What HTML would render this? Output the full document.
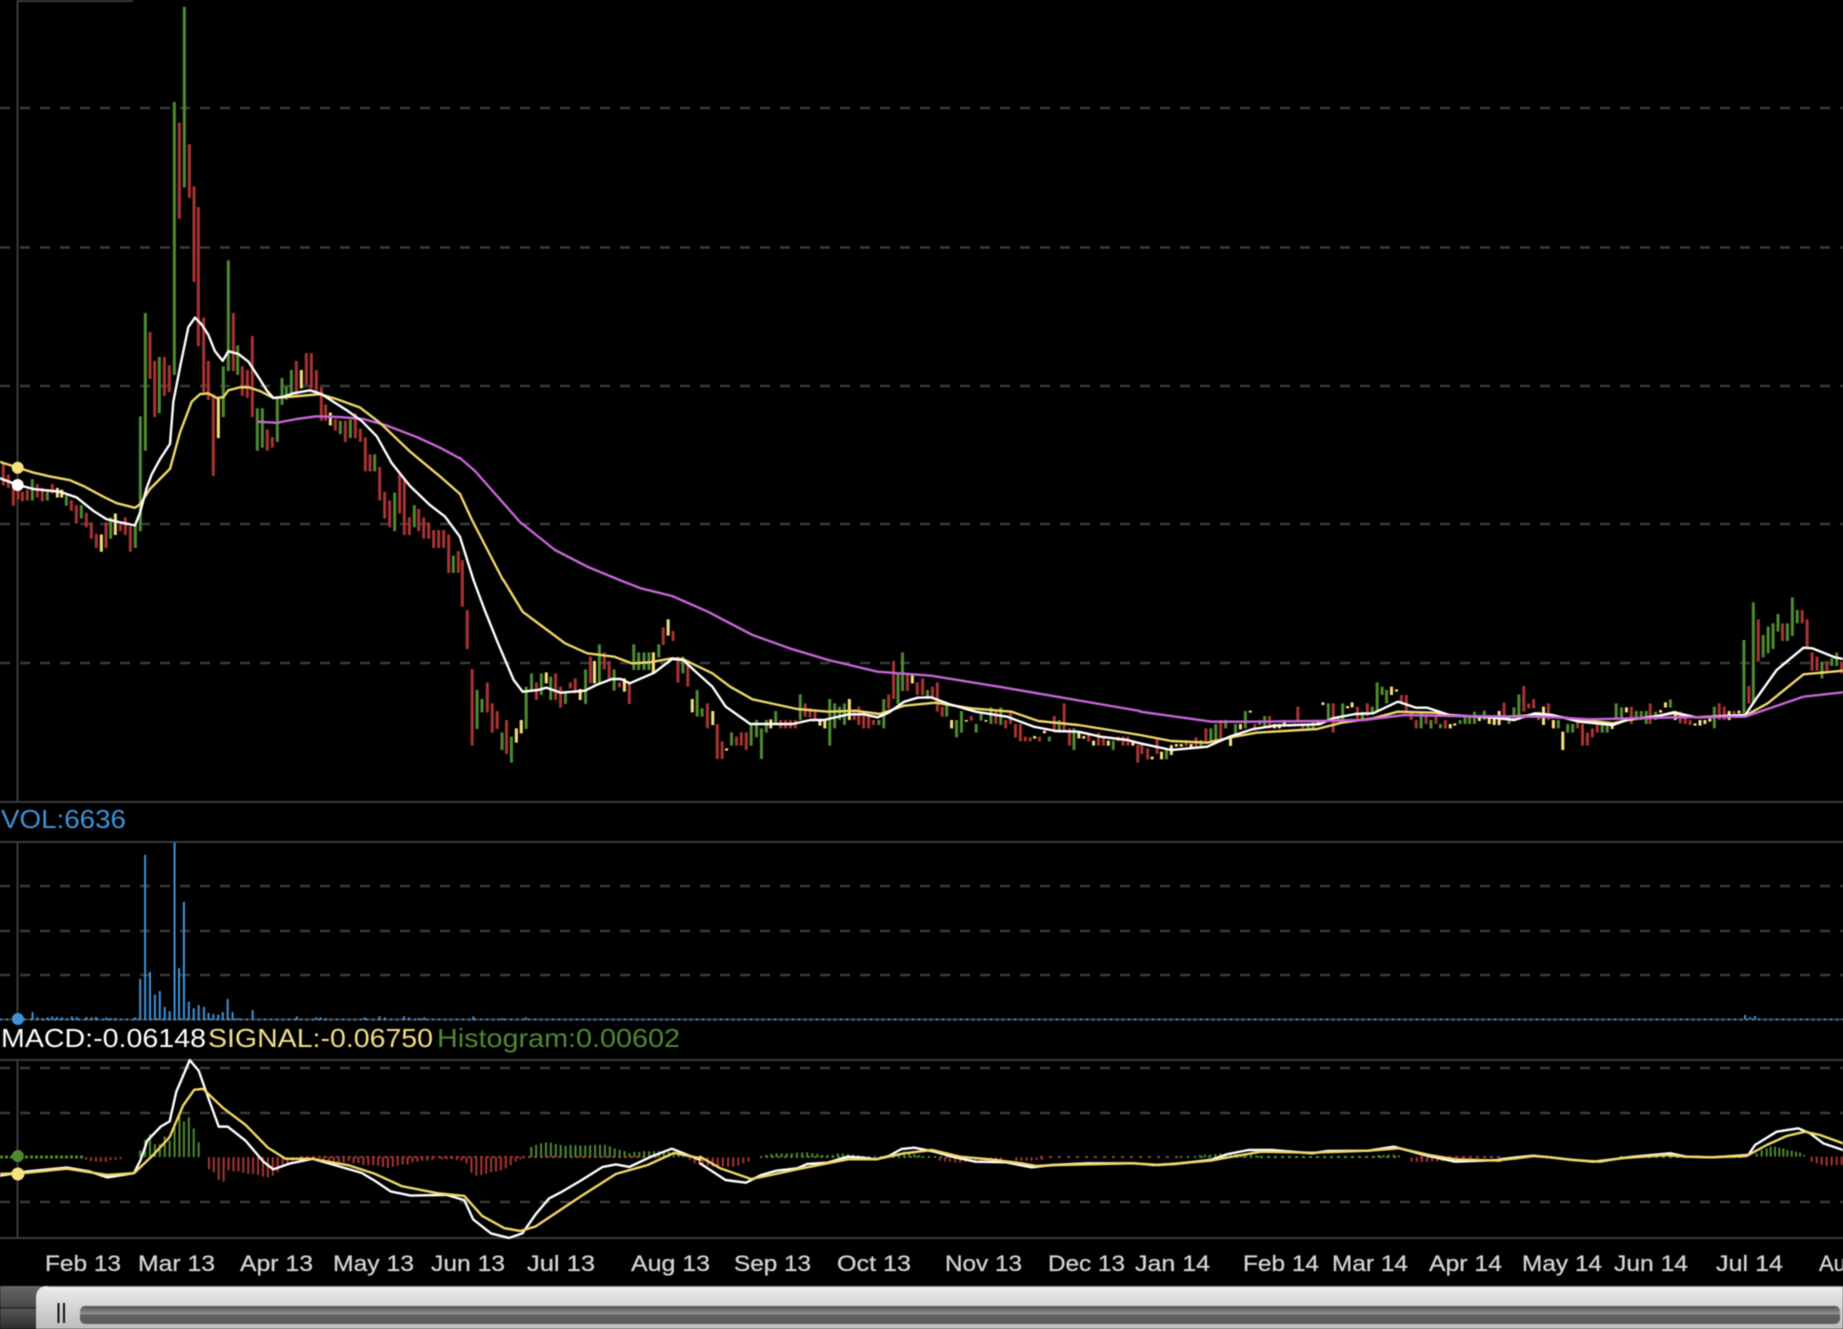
<!DOCTYPE html>
<html><head><meta charset="utf-8"><title>Chart</title>
<style>
html,body{margin:0;padding:0;background:#000;width:1843px;height:1329px;overflow:hidden}
svg{display:block;position:absolute;left:0;top:0;filter:blur(.45px)}
path{vector-effect:non-scaling-stroke;fill:none}
.r{stroke:#a83434}.g{stroke:#4f8a32}.y{stroke:#f6df7e}
.c path{stroke-width:3}
.h path{stroke-width:2}
.lw,.ly,.lp{stroke-linejoin:round;stroke-linecap:round;stroke-width:2.4}
.lw{stroke:#fff}.ly{stroke:#f0d768}.lp{stroke:#c765d8}
.grid{stroke:#3a3a3a;stroke-width:2.4;stroke-dasharray:10 10}
.ax{stroke:#3a3a3a;stroke-width:2}
text{font-family:"Liberation Sans",sans-serif}
.m{font-size:22px;fill:#d4d4d4;stroke:#d4d4d4;stroke-width:.3px}
.leg{font-size:26px}
</style></head><body>
<svg width="1843" height="1329" xmlns="http://www.w3.org/2000/svg">
<defs>
<linearGradient id="pan" x1="0" y1="0" x2="0" y2="1"><stop offset="0" stop-color="#ececec"/><stop offset=".5" stop-color="#d4d4d4"/><stop offset="1" stop-color="#bcbcbc"/></linearGradient>
<linearGradient id="trk" x1="0" y1="0" x2="0" y2="1"><stop offset="0" stop-color="#505050"/><stop offset=".45" stop-color="#929292"/><stop offset=".5" stop-color="#606060"/><stop offset="1" stop-color="#5c5c5c"/></linearGradient>
<linearGradient id="lft" x1="0" y1="0" x2="0" y2="1"><stop offset="0" stop-color="#666"/><stop offset=".48" stop-color="#4a4a4a"/><stop offset=".5" stop-color="#222"/><stop offset=".55" stop-color="#555"/><stop offset="1" stop-color="#2c2c2c"/></linearGradient>
</defs>
<rect width="1843" height="1329" fill="#000"/>
<!-- frame lines -->
<path class="ax" d="M17.5 1H133M17.5 0V802M17.5 842V1020M17.5 1060V1237M0 802H1843M0 842H1843M0 1060H1843M0 1238H1843"/>
<!-- grids -->
<path class="grid" d="M0 108H1843M0 247.500H1843M0 386H1843M0 524H1843M0 663H1843M0 886H1843M0 931H1843M0 975H1843M0 1068H1843M0 1113H1843M0 1202H1843"/>

<!-- candles region 1 -->
<g class="c" transform="scale(.33333,.38265)">
<path class="r" d="M10 1210V1268M25 1240V1275M40 1270V1322M54 1270V1305M67 1285V1310M82 1280V1308M112 1265V1300M127 1275V1310M157 1265V1290M214 1307V1335M229 1320V1368M259 1340V1378M274 1365V1408M289 1395V1432M318 1365V1432M361 1370V1388M376 1352V1398M391 1375V1442M450 868V990M464 943V1090M493 933V1035M508 955V1025M538 320V572M568 377V517M582 487V737M595 541V905M611 830V1025M625 943V1045M640 1030V1244M700 818V970M727 957V1035M742 967V1040M757 878V1090M802 1122V1178M817 1142V1170M889 943V1035M919 923V1005M934 923V1015M949 967V1025M964 1012V1100M977 1057V1100M1006 1095V1125M1036 1100V1155M1066 1080V1145M1081 1120V1155M1096 1143V1232M1110 1187V1232M1139 1220V1308M1154 1285V1355M1169 1308V1378M1199 1240V1342M1213 1250V1398M1228 1352V1398M1256 1330V1388M1271 1352V1408M1286 1365V1408M1301 1385V1432M1316 1385V1432M1331 1385V1432M1346 1397V1497M1375 1440V1497"/>
<path class="g" d="M97 1252V1308M142 1285V1308M199 1295V1322M244 1320V1355M332 1352V1408M406 1372V1432M421 1088V1388M436 818V1178M478 933V1080M523 267V980M553 18V490M670 957V1090M685 680V970M713 903V980M772 1067V1178M787 1067V1170M832 1040V1155M846 988V1058M859 1010V1045M874 967V1035M1021 1100V1135M1051 1097V1145M1124 1187V1232M1184 1287V1388M1243 1320V1378M1360 1452V1497"/>
<path class="y" d="M172 1275V1300M185 1280V1300M304 1397V1442M346 1342V1398M655 1042V1145M904 967V1015M991 1078V1112"/>
</g>
<!-- candles region 2 -->
<g class="c" transform="translate(440,580) scale(.44643,.33333)">
<path class="r" d="M50 -60V80M61 90V207M72 267V497M106 307V397M117 370V458M128 393V447M149 420V522M216 307V360M259 280V360M270 320V383M292 307V325M303 295V340M337 230V310M368 217V268M379 243V300M402 307V322M424 310V372M500 142V195M522 153V183M533 230V308M555 243V320M599 370V445M621 432V537M632 484V537M664 470V497M675 457V497M686 457V510M763 420V445M774 420V445M785 420V445M796 420V445M818 370V410M829 385V412M840 395V420M928 395V420M938 380V435M949 405V445M960 405V445M971 420V435M1005 343V385M1016 243V357M1047 280V333M1069 307V345M1081 295V345M1103 320V355M1114 307V395M1125 380V410M1190 408V422M1245 395V432M1267 420V445M1278 395V432M1289 432V472M1300 432V484M1311 470V484M1322 472V484M1343 470V484M1376 408V458M1398 370V458M1410 445V497M1453 458V484M1475 458V497M1486 470V497M1519 470V484M1530 470V497M1541 470V497M1563 495V548"/>
<path class="g" d="M83 330V447M94 357V397M139 457V510M160 470V548M193 320V447M205 280V335M227 280V345M248 290V360M281 340V372M326 268V372M357 193V310M390 268V332M434 193V270M445 217V270M457 217V270M468 217V270M490 193V232M544 230V280M576 330V410M587 385V410M653 457V497M697 432V497M709 420V472M720 445V537M731 420V458M752 393V430M807 343V420M873 357V497M884 370V445M895 380V420M906 370V435M983 420V435M994 357V445M1026 280V372M1036 217V333M1092 330V357M1135 370V410M1157 420V472M1168 393V458M1201 432V458M1212 395V422M1234 382V432M1256 382V435M1365 470V484M1387 420V458M1420 445V510M1508 482V510"/>
<path class="y" d="M171 445V488M182 420V460M238 277V310M314 327V360M346 243V310M413 295V335M478 217V280M511 118V167M565 357V397M611 393V435M642 505V512M741 418V445M851 420V437M862 420V445M917 357V420M1058 285V310M1146 420V445M1179 420V425M1223 420V425M1332 468V476M1354 452V460M1431 458V475M1442 468V476M1464 482V497M1497 482V497M1552 482V497"/>
</g>
<!-- candles region 3 -->
<g class="c" transform="translate(1140,580) scale(.44834,.33333)">
<path class="r" d="M4 490V522M17 505V538M38 478V522M103 480V498M125 472V505M147 445V490M180 420V475M256 432V450M289 408V445M344 430V440M352 380V423M363 430V445M431 370V458M485 380V420M507 370V408M583 345V370M594 345V395M605 395V420M616 420V445M638 408V432M660 408V432M681 420V445M812 368V420M856 318V395M867 370V385M878 357V385M911 370V420M976 420V445M987 432V497M998 458V497M1009 445V472M1020 432V458M1096 380V432M1138 370V432M1205 395V430M1216 408V432M1227 420V435M1292 370V420M1303 380V420M1325 393V408M1358 318V370M1379 118V245M1433 130V183M1477 90V130M1488 118V200M1499 217V272M1510 230V272M1532 243V272M1565 245V280"/>
<path class="g" d="M59 510V538M136 480V500M158 445V490M169 432V490M191 420V445M213 432V470M235 393V445M267 420V435M278 408V445M375 432V445M386 420V445M420 370V420M442 408V420M452 370V420M496 395V420M518 380V398M529 307V395M540 320V345M550 330V370M627 395V445M649 420V445M670 432V445M714 420V432M725 408V432M735 408V432M746 395V432M768 392V420M823 408V432M834 382V420M845 343V408M889 395V420M933 420V445M954 432V458M965 432V458M1031 432V458M1042 432V458M1062 370V420M1074 382V420M1107 393V420M1118 393V420M1129 393V432M1150 395V420M1183 358V383M1281 380V445M1347 180V400M1368 67V370M1390 165V232M1401 140V220M1412 130V207M1423 102V155M1444 130V183M1455 52V168M1466 90V130M1521 245V295M1543 235V258M1554 217V258"/>
<path class="y" d="M27 530V538M48 515V538M70 495V525M81 492V500M92 492V500M114 492V502M202 470V498M224 432V448M246 392V398M300 432V445M311 432V445M322 420V440M333 432V440M397 420V435M408 367V375M463 378V385M473 367V382M561 320V345M572 328V335M692 432V445M702 430V437M757 408V423M779 408V432M790 408V435M801 393V435M900 380V435M922 420V445M943 455V510M1053 432V447M1085 382V397M1161 390V398M1172 367V382M1194 393V420M1238 430V437M1249 420V437M1260 420V432M1271 415V425M1314 393V420M1336 392V400"/>
</g>

<!-- main lines -->
<path class="lp" d="M460 458L475 471L520 522L555 550L588 567L619.500 580"/>
<path class="ly" d="M460 494L472 520L503 580"/>
<path class="lw" d="M460 537L473.500 580"/>
<g transform="scale(.33333,.38265)">
<path class="lp" d="M775 1102L830 1105L890 1095L950 1088L1020 1090L1090 1095L1160 1112L1250 1142L1320 1170L1380 1198"/>
<path class="ly" d="M0 1207L53 1222L100 1235L150 1245L210 1255L250 1270L310 1298L350 1315L405 1327L420 1318L450 1278L510 1225L540 1130L575 1050L600 1030L625 1028L650 1040L670 1038L685 1020L720 1012L745 1012L780 1022L820 1040L870 1037L960 1030L1010 1043L1080 1065L1140 1105L1230 1180L1320 1245L1380 1291"/>
<path class="lw" d="M0 1250L53 1267L100 1278L180 1285L230 1300L280 1335L320 1357L360 1365L405 1373L420 1340L440 1275L455 1240L480 1200L510 1160L520 1050L540 960L565 855L585 830L605 848L625 875L645 918L668 943L685 918L715 925L745 945L775 985L800 1020L820 1040L850 1037L880 1028L930 1020L965 1030L1000 1050L1040 1072L1085 1100L1130 1140L1175 1210L1230 1270L1290 1320L1335 1350L1380 1403"/>
</g>
<g transform="translate(440,580) scale(.44643,.33333)">
<path class="lp" d="M402 0L450 25L520 48L600 95L700 165L790 208L870 240L980 275L1100 287L1260 322L1390 352L1568 393"/>
<path class="ly" d="M142 0L185 95L240 150L280 190L330 220L390 230L430 250L470 247L520 235L545 238L610 280L650 320L700 358L800 387L870 395L930 392L985 402L1040 377L1110 368L1190 385L1280 395L1340 423L1430 435L1500 450L1568 465"/>
<path class="lw" d="M75 0L100 90L130 190L165 300L185 335L220 330L238 323L270 338L325 332L350 315L385 297L405 297L425 310L480 278L520 237L545 240L570 272L610 320L640 380L695 432L790 432L830 420L860 420L915 403L950 403L980 412L1005 398L1040 365L1070 353L1100 352L1140 372L1200 395L1270 410L1330 440L1380 453L1430 455L1480 470L1540 480L1568 490"/>
</g>
<g transform="translate(1140,580) scale(.44834,.33333)">
<path class="ly" d="M0 465L70 483L150 488L210 470L260 458L395 447L450 428L520 415L575 395L660 398L690 407L800 412L880 405L920 408L1000 422L1055 430L1090 420L1190 400L1240 412L1350 407L1400 370L1480 283L1568 272"/>
<path class="lw" d="M0 490L70 510L150 500L200 470L250 448L300 437L400 433L430 415L480 402L520 400L575 365L615 383L640 383L690 405L780 412L835 420L880 400L920 405L980 425L1055 435L1090 418L1150 410L1190 397L1240 412L1350 405L1375 355L1420 270L1480 203L1500 205L1550 232L1568 237"/>
<path class="lp" d="M0 395L80 410L160 425L270 425L400 423L500 420L590 405L700 408L900 410L1000 418L1200 412L1350 410L1480 350L1568 337"/>
</g>
<circle cx="17.700" cy="467.700" r="6" fill="#f6df7e"/>
<circle cx="17.700" cy="485" r="6" fill="#fff"/>

<!-- volume -->
<path d="M0 1019.500H1843" stroke="#333" stroke-width="2"/>
<path d="M0 1019.500H1843" stroke="#3e93d8" stroke-width="2" stroke-dasharray="2 4"/>
<g transform="translate(0,780) scale(.44643,.35013)">
<path stroke="#3e93d8" stroke-width="2" d="M73 663V685M84 678V685M95 680V685M106 678V685M117 675V685M128 677V685M139 678V685M150 680V685M161 675V685M172 677V685M194 677V685M205 678V685M215 677V685M238 678V685M248 680V685M259 680V685M303 678V685M314 568V685M325 214V685M336 548V685M347 613V685M358 603V685M369 648V685M380 660V685M391 178V685M401 537V685M412 348V685M423 633V685M434 652V685M445 643V685M457 648V685M467 665V685M478 668V685M489 670V685M499 663V685M510 625V685M521 663V685M534 680V685M566 657V685M620 681V685M665 675V685M708 678V685M718 678V685M730 680V685M817 678V685M850 675V685M862 678V685M905 675V685M916 678V685M938 680V685M950 678V685M1060 675V685M1125 680V685M1146 681V685M1178 678V685"/>
</g>
<path stroke="#3e93d8" stroke-width="2" d="M1745 1019V1015M1750 1019V1017M1755 1019V1016"/>
<circle cx="17.900" cy="1019" r="6" fill="#3e93d8"/>

<!-- MACD histogram -->
<path d="M0 1157H85" stroke="#4f8a32" stroke-width="3" stroke-dasharray="3 2"/>
<path d="M300 1157H660" stroke="#a83434" stroke-width="2" stroke-dasharray="3 3"/>
<path d="M760 1157H960" stroke="#4f8a32" stroke-width="2" stroke-dasharray="2 4"/>
<path d="M1040 1157H1180" stroke="#a83434" stroke-width="2" stroke-dasharray="3 6"/>
<path d="M1180 1157H1260" stroke="#4f8a32" stroke-width="2" stroke-dasharray="2 5"/>
<path d="M1260 1157H1400" stroke="#4f8a32" stroke-width="2" stroke-dasharray="3 4"/>
<path d="M1420 1157H1500" stroke="#a83434" stroke-width="2" stroke-dasharray="3 4"/>
<path d="M1620 1157H1745" stroke="#4f8a32" stroke-width="2" stroke-dasharray="3 4"/>
<g class="h" transform="translate(0,780) scale(.44643,.35013)">
<path class="g" d="M314 1077V1058M325 1077V1028M336 1077V1012M347 1077V1040M358 1077V1040M369 1077V1018M380 1077V1030M391 1077V980M402 1077V960M412 1077V975M423 1077V963M434 1077V995M445 1077V1035M1190 1077V1048M1201 1077V1042M1212 1077V1038M1223 1077V1035M1234 1077V1036M1245 1077V1040M1256 1077V1042M1267 1077V1045M1278 1077V1043M1289 1077V1043M1300 1077V1044M1311 1077V1044M1322 1077V1043M1333 1077V1042M1344 1077V1042M1355 1077V1042M1366 1077V1046M1377 1077V1052M1388 1077V1056M1399 1077V1060M1410 1077V1066M1421 1077V1062M1432 1077V1062M1443 1077V1060M1454 1077V1060M1465 1077V1060M1476 1077V1060M1487 1077V1060M1498 1077V1062M1509 1077V1065M1520 1077V1068M1531 1077V1070"/>
<path class="r" d="M193 1077V1085M204 1077V1088M215 1077V1090M226 1077V1090M237 1077V1090M248 1077V1085M259 1077V1085M270 1077V1083M468 1077V1112M479 1077V1120M490 1077V1142M501 1077V1147M512 1077V1115M523 1077V1118M534 1077V1118M545 1077V1122M556 1077V1125M567 1077V1125M578 1077V1128M589 1077V1133M600 1077V1135M611 1077V1130M622 1077V1120M633 1077V1105M644 1077V1095M655 1077V1088M666 1077V1085M725 1077V1085M737 1077V1087M748 1077V1088M759 1077V1092M770 1077V1092M781 1077V1088M792 1077V1095M803 1077V1095M814 1077V1100M825 1077V1100M836 1077V1100M847 1077V1102M858 1077V1105M869 1077V1108M880 1077V1105M891 1077V1102M902 1077V1098M913 1077V1098M924 1077V1092M935 1077V1090M946 1077V1087M957 1077V1087M968 1077V1085M990 1077V1083M1001 1077V1083M1012 1077V1083M1023 1077V1085M1034 1077V1087M1045 1077V1095M1056 1077V1122M1067 1077V1130M1078 1077V1128M1089 1077V1125M1100 1077V1120M1111 1077V1118M1122 1077V1115M1133 1077V1110M1144 1077V1100M1155 1077V1090M1166 1077V1083M1545 1077V1085M1556 1077V1095M1567 1077V1095"/>
</g>
<g class="h" transform="translate(700,1000) scale(.51020,.33333)">
<path class="r" d="M5 472V495M15 472V497M25 472V500M35 472V505M45 472V500M55 472V500M65 472V500M75 472V497M85 472V490M95 472V485M470 472V482M480 472V485M490 472V485M500 472V488M510 472V488M520 472V486M530 472V485M540 472V483M550 472V483M560 472V482M570 472V482M580 472V482M590 472V482M620 472V482M630 472V482M640 472V482M650 472V482M660 472V480M670 472V480M1395 472V485M1405 472V486M1415 472V486M1425 472V486M1435 472V484M1445 472V484M1455 472V484M1465 472V482M1475 472V480"/>
<path class="g" d="M120 472V468M130 472V465M140 472V462M150 472V460M160 472V460M170 472V460M180 472V460M190 472V458M200 472V457M210 472V457M220 472V460M230 472V462M240 472V465M250 472V465M260 472V465M270 472V460M280 472V460M290 472V462M300 472V463M310 472V465M370 472V468M380 472V465M390 472V460M400 472V455M410 472V458M420 472V462M430 472V465M980 472V465M990 472V464M1000 472V464M1010 472V462M1020 472V460M1030 472V460M1040 472V460M1050 472V462M1060 472V463M1070 472V463M1080 472V464M1090 472V466M1330 472V465M1340 472V465M1350 472V464M1360 472V464M1370 472V466"/>
</g>
<g class="h" transform="translate(1500,1100) scale(.33333,.33333)">
<path class="g" d="M770 170V160M785 170V150M800 170V145M812 170V140M825 170V140M838 170V143M850 170V145M862 170V150M875 170V152M888 170V155M900 170V158M912 170V165"/>
<path class="r" d="M935 170V185M950 170V190M965 170V195M980 170V198M995 170V197M1010 170V195M1025 170V195"/>
</g>

<!-- MACD lines -->
<g transform="translate(0,780) scale(.44643,.35013)">
<path class="lw" d="M0 1130L60 1118L150 1107L200 1118L240 1135L300 1123L315 1085L330 1030L360 990L380 975L395 890L425 800L445 830L470 920L490 990L510 990L550 1030L590 1090L612 1112L650 1095L700 1082L750 1100L810 1122L840 1145L875 1175L920 1187L1000 1185L1040 1200L1060 1255L1100 1295L1140 1308L1170 1295L1200 1240L1230 1195L1260 1175L1300 1145L1350 1105L1380 1098L1410 1105L1460 1075L1505 1053L1568 1085"/>
<path class="ly" d="M0 1125L60 1122L150 1110L240 1128L300 1123L340 1075L380 1020L410 930L435 885L455 882L500 937L550 985L600 1050L640 1082L700 1082L780 1100L840 1125L900 1160L980 1180L1040 1188L1080 1245L1130 1280L1165 1288L1200 1275L1300 1190L1380 1125L1450 1100L1510 1065L1568 1080"/>
</g>
<g transform="translate(700,1000) scale(.51020,.33333)">
<path class="lw" d="M0 490L25 515L50 540L90 548L120 525L150 512L190 505L210 492L250 488L290 470L320 473L345 478L370 468L395 447L420 443L460 455L500 472L540 485L600 487L650 502L690 495L760 490L850 490L890 495L930 492L1000 480L1035 462L1075 450L1120 450L1200 460L1230 453L1310 452L1360 440L1420 465L1480 485L1568 480"/>
<path class="ly" d="M0 470L40 505L100 537L130 528L200 505L290 478L345 478L400 460L455 450L510 470L580 480L630 490L660 498L700 495L850 490L900 495L1000 482L1050 468L1100 455L1200 458L1310 452L1370 445L1430 465L1480 478L1568 482"/>
</g>
<g transform="translate(1500,1100) scale(.33333,.33333)">
<path class="lw" d="M0 178L50 172L100 167L150 172L200 178L280 185L340 178L400 170L510 160L560 170L640 172L745 165L765 135L830 95L895 85L930 100L970 130L1029 150"/>
<path class="ly" d="M0 180L50 175L100 168L150 172L220 180L300 185L360 175L500 165L560 170L630 172L740 168L800 135L860 108L915 95L960 105L1029 130"/>
</g>
<circle cx="17.900" cy="1156" r="6" fill="#4f8a32"/>
<circle cx="17.900" cy="1174" r="6.500" fill="#f6df7e"/>

<!-- legends -->
<text class="leg" x="1" y="828" fill="#3e93d8" textLength="125" lengthAdjust="spacingAndGlyphs">VOL:6636</text>
<text class="leg" x="1" y="1047" fill="#fff" textLength="205" lengthAdjust="spacingAndGlyphs">MACD:-0.06148</text>
<text class="leg" x="208" y="1047" fill="#f3de8a" textLength="225" lengthAdjust="spacingAndGlyphs">SIGNAL:-0.06750</text>
<text class="leg" x="437" y="1047" fill="#4f8a32" textLength="243" lengthAdjust="spacingAndGlyphs">Histogram:0.00602</text>

<!-- axis labels -->
<text class="m" x="45" y="1271" textLength="76" lengthAdjust="spacingAndGlyphs">Feb 13</text>
<text class="m" x="138" y="1271" textLength="77" lengthAdjust="spacingAndGlyphs">Mar 13</text>
<text class="m" x="240" y="1271" textLength="73" lengthAdjust="spacingAndGlyphs">Apr 13</text>
<text class="m" x="333" y="1271" textLength="81" lengthAdjust="spacingAndGlyphs">May 13</text>
<text class="m" x="431" y="1271" textLength="74" lengthAdjust="spacingAndGlyphs">Jun 13</text>
<text class="m" x="527" y="1271" textLength="68" lengthAdjust="spacingAndGlyphs">Jul 13</text>
<text class="m" x="631" y="1271" textLength="79" lengthAdjust="spacingAndGlyphs">Aug 13</text>
<text class="m" x="734" y="1271" textLength="77" lengthAdjust="spacingAndGlyphs">Sep 13</text>
<text class="m" x="837" y="1271" textLength="74" lengthAdjust="spacingAndGlyphs">Oct 13</text>
<text class="m" x="945" y="1271" textLength="77" lengthAdjust="spacingAndGlyphs">Nov 13</text>
<text class="m" x="1048" y="1271" textLength="77" lengthAdjust="spacingAndGlyphs">Dec 13</text>
<text class="m" x="1135" y="1271" textLength="75" lengthAdjust="spacingAndGlyphs">Jan 14</text>
<text class="m" x="1243" y="1271" textLength="76" lengthAdjust="spacingAndGlyphs">Feb 14</text>
<text class="m" x="1332" y="1271" textLength="76" lengthAdjust="spacingAndGlyphs">Mar 14</text>
<text class="m" x="1429" y="1271" textLength="73" lengthAdjust="spacingAndGlyphs">Apr 14</text>
<text class="m" x="1522" y="1271" textLength="80" lengthAdjust="spacingAndGlyphs">May 14</text>
<text class="m" x="1614" y="1271" textLength="74" lengthAdjust="spacingAndGlyphs">Jun 14</text>
<text class="m" x="1716" y="1271" textLength="67" lengthAdjust="spacingAndGlyphs">Jul 14</text>
<text class="m" x="1819" y="1271">Aug 14</text>

<!-- bottom strip -->
<rect x="0" y="1286" width="50" height="43" fill="url(#lft)"/>
<path d="M36 1329V1298Q36 1286 48 1286H1843V1329Z" style="fill:url(#pan)"/>
<path d="M48 1286.500H1843" stroke="#9a9a9a" stroke-width="1"/>
<path d="M58.500 1303V1323M64 1303V1323" stroke="#111" stroke-width="2"/>
<rect x="80" y="1306" width="1760" height="18" rx="5" fill="url(#trk)"/>
</svg>
</body></html>
